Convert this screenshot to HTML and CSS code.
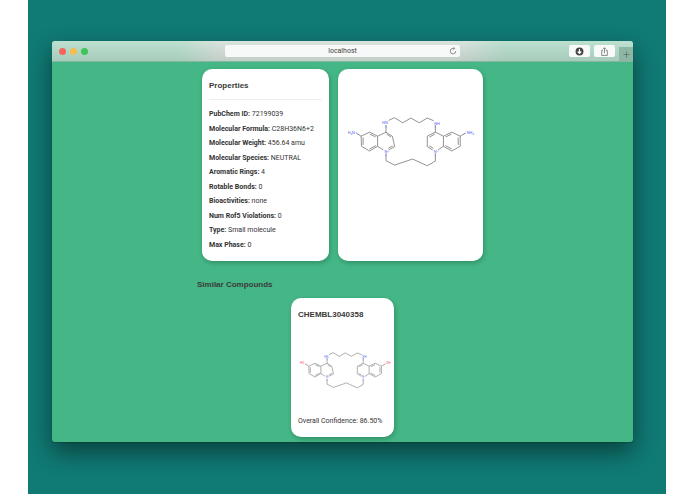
FILE: index.html
```html
<!DOCTYPE html>
<html lang="en">
<head>
<meta charset="utf-8">
<title>Compound properties</title>
<link rel="stylesheet" href="styles.css">
</head>
<body>
<svg class="defs" aria-hidden="true">
  <symbol id="skeleton" viewBox="30 30 390 180">
    <g fill="none" stroke="#6c6c6c" stroke-width="2.2" stroke-linejoin="round">
      <path d="M160 61L177 53L202 68L226 54L251 68L275 54L294 62"/>
      <path d="M152 75V96M299 75V96M64 99L78 108M388 99L373 108"/>
      <path d="M78 108L103 96L127 108V138L103 152L79 138Z"/>
      <path d="M127 108L152 96L171 108L178 139L160 149M127 138L144 149"/>
      <path d="M84 112V134M104 102L121 110M103 146L122 136M154 102L167 110M172 137L159 144"/>
      <path d="M373 108L348 96L323 108V138L348 152L373 138Z"/>
      <path d="M323 108L299 96L275 108V139L291 149M323 138L307 149"/>
      <path d="M367 112V134M347 102L330 110M348 146L329 136M297 102L281 111M281 137L293 144"/>
      <path d="M152 160V181L178 194L231 176L275 196L299 182V160"/>
    </g>
    <g stroke="#7d8bea" stroke-width="2.2">
      <path d="M152 75V84M299 75V84M152 159V168M299 159V168"/>
    </g>
  </symbol>
</svg>
<div class="backdrop">
  <div class="window">
    <header class="toolbar">
      <div class="lights"><span class="light close"></span><span class="light minimise"></span><span class="light expand"></span></div>
      <div class="address">
        <input type="text" value="localhost" aria-label="Address">
        <button class="reload" aria-label="Reload"><svg viewBox="0 0 16 16" fill="none" stroke="#777" stroke-width="1.6"><path d="M13.5 8A5.5 5.5 0 1 1 8 2.8H11M8.500 0L11.500 2.800L8.500 5.600"/></svg></button>
      </div>
      <div class="actions">
        <button class="tool" aria-label="Downloads"><svg viewBox="0 0 16 16"><circle cx="8" cy="8" r="7" fill="#454545"/><path d="M8 3.500V11M4.800 8L8 11.500L11.200 8" fill="none" stroke="#fff" stroke-width="2"/></svg></button>
        <button class="tool" aria-label="Share"><svg viewBox="0 0 16 16" fill="none" stroke="#777" stroke-width="1.500"><path d="M5.500 6H3V15H13V6H10.500M8 11V1.500M5.300 4L8 1.300L10.700 4"/></svg></button>
        <button class="new-tab" aria-label="New tab"><svg viewBox="0 0 16 16" fill="none" stroke="#5d7469" stroke-width="1.800"><path d="M8 1V15M1 8H15"/></svg></button>
      </div>
    </header>
    <main class="content">
      <div class="overview">
        <section class="card properties">
          <h2>Properties</h2>
          <ul>
            <li><b>PubChem ID:</b> 72199039</li>
            <li><b>Molecular Formula:</b> C28H36N6+2</li>
            <li><b>Molecular Weight:</b> 456.64 amu</li>
            <li><b>Molecular Species:</b> NEUTRAL</li>
            <li><b>Aromatic Rings:</b> 4</li>
            <li><b>Rotable Bonds:</b> 0</li>
            <li><b>Bioactivities:</b> none</li>
            <li><b>Num Rof5 Violations:</b> 0</li>
            <li><b>Type:</b> Small molecule</li>
            <li><b>Max Phase:</b> 0</li>
          </ul>
        </section>
        <section class="card structure">
          <svg class="molecule" viewBox="30 30 390 180" role="img" aria-label="Molecular structure">
            <use href="#skeleton" x="30" y="30" width="390" height="180"/>
            <path d="M62 98L70 103M390 98L382 103" stroke="#7d8bea" stroke-width="2"/>
            <g class="nitrogen" text-anchor="middle">
              <text x="149" y="73">HN</text><text x="304" y="74">NH</text>
              <text x="154" y="157">N⁺</text><text x="301" y="157">N⁺</text>
              <text x="49" y="101">H₂N</text><text x="403" y="101">NH₂</text>
            </g>
          </svg>
        </section>
      </div>
      <h2 class="similar-title">Similar Compounds</h2>
      <article class="card compound">
        <h3>CHEMBL3040358</h3>
        <svg class="molecule" viewBox="30 30 390 180" role="img" aria-label="Structure of CHEMBL3040358">
          <use href="#skeleton" x="30" y="30" width="390" height="180"/>
          <path d="M62 98L70 103M390 98L382 103" stroke="#ee7d8b" stroke-width="2"/>
          <g class="nitrogen" text-anchor="middle">
            <text x="149" y="73">HN</text><text x="304" y="74">NH</text>
            <text x="154" y="157">N⁺</text><text x="301" y="157">N⁺</text>
          </g>
          <g class="oxygen" text-anchor="middle"><text x="51" y="100">HO</text><text x="401" y="100">OH</text></g>
        </svg>
        <p>Overall Confidence: 86.50%</p>
      </article>
    </main>
  </div>
</div>
</body>
</html>
```
FILE: styles.css
```css
* { box-sizing: border-box; }

body {
  margin: 0;
  background: #fff;
  color: #333;
  font: 7px/14px Roboto, "Liberation Sans", Arial, sans-serif;
}

h2, h3, p, ul { margin: 0; padding: 0; }
h2, h3 { font: bold 8px/12px "Liberation Sans", Arial, sans-serif; color: #3a3a3a; }
button { padding: 0; border: 0; background: none; display: grid; place-items: center; }
svg { display: block; }

.defs { position: absolute; width: 0; height: 0; }

.backdrop {
  display: flex;
  min-height: 100vh;
  margin: 0 29px 0 28px;
  padding: 41px 33px 52px 24px;
  background: #107a74;
  overflow: hidden;
}

.window {
  flex: 1;
  display: flex;
  flex-direction: column;
  border-radius: 3px;
  background: #45b787;
  box-shadow: 0 1px 1px rgba(0, 60, 45, .4), 0 10px 24px rgba(0, 0, 0, .48);
}

.toolbar {
  display: grid;
  grid-template-columns: 1fr 235px 1fr;
  align-items: center;
  height: 21px;
  border-bottom: 1px solid #86b5a0;
  border-radius: 3px 3px 0 0;
  background:
    linear-gradient(rgba(255, 255, 255, .12), rgba(100, 120, 110, .16)),
    linear-gradient(90deg, #b4dcca 0, #b4dcca 22%, #d5dfda 29%, #d5dfda 70%, #b4dcca 78%);
}

.lights { display: flex; gap: 4px; padding-left: 7px; }
.light { width: 7px; height: 7px; border-radius: 50%; }
.close { background: #f4645e; }
.minimise { background: #f5be4e; }
.expand { background: #3ec555; }

.address {
  display: flex;
  align-items: center;
  height: 12px;
  padding: 0 3px 0 11px;
  border-radius: 2px;
  background: #f7f9f8;
}
.address input {
  flex: 1;
  min-width: 0;
  padding: 0;
  border: 0;
  background: none;
  color: #444;
  font: inherit;
  line-height: 12px;
  text-align: center;
}
.reload svg { width: 8px; height: 8px; }

.actions { display: flex; align-self: stretch; align-items: center; justify-content: flex-end; gap: 4px; }
.tool { width: 21px; height: 12px; border-radius: 2px; background: #f7faf8; }
.tool svg { width: 9px; height: 9px; }
.new-tab { align-self: flex-end; width: 14px; height: 14px; background: #8db7a4; }
.new-tab svg { width: 7px; height: 7px; }

.content {
  width: 100%;
  max-width: 291px;
  margin: 0 auto;
  padding: 7px 0 5px;
}

.card {
  border-radius: 10px;
  background: #fff;
  box-shadow: 1px 2px 5px rgba(0, 50, 30, .3);
}

.overview {
  display: grid;
  grid-template-columns: 127fr 145fr;
  gap: 9px;
  min-height: 192px;
  padding: 0 5px;
}

.properties { display: flex; flex-direction: column; padding: 11px 7px 9px; }
.properties h2 { padding-bottom: 7px; border-bottom: 1px solid #eee; }
.properties ul {
  flex: 1;
  display: flex;
  flex-direction: column;
  justify-content: space-between;
  margin-top: 7px;
  list-style: none;
}

.structure { padding: 41px 7px; }
.molecule { width: 100%; overflow: visible; }
.nitrogen, .oxygen { font-size: 12px; }
.nitrogen { fill: #5c6cf0; }
.oxygen { fill: #f04c5c; }

.similar-title { margin: 18px 0 7px; }

.compound { width: 103px; min-height: 139px; margin: 0 auto; padding: 11px 1px 9px 6px; }
.compound .molecule { margin: 26px 0 23px; }
.compound h3, .compound p { padding-left: 1px; }
```
